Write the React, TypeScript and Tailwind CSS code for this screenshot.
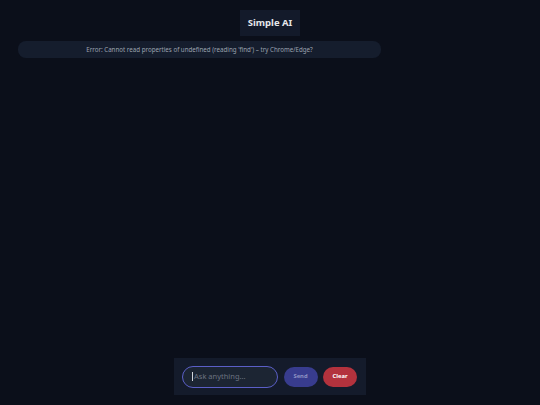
import React from 'react';

export default function App() {
  return (
    <div
      className="w-[540px] h-[405px] bg-[#0b0f1a] flex flex-col overflow-hidden"
      style={{ fontFamily: '"Noto Sans", "Open Sans", sans-serif' }}
    >
      <div className="flex justify-center pt-[10px]">
        <div className="w-[60px] h-[26px] bg-[#131a2a] flex items-center justify-center text-[9.5px] font-bold text-[#e5e7eb]">
          Simple AI
        </div>
      </div>

      <div className="mt-[5px] ml-[18px] w-[363px] h-[17px] rounded-[8px] bg-[#151d2d] flex items-center justify-center text-[6.2px] text-[#9ca3af]">
        Error: Cannot read properties of undefined (reading 'find') – try Chrome/Edge?
      </div>

      <div className="flex-1" />

      <div className="flex justify-center mb-[10px]">
        <div className="w-[192px] h-[37px] bg-[#141b2b] flex items-center gap-[5.5px] px-[8px]">
          <div className="w-[96px] h-[22px] rounded-full border border-[#5b5fc7] bg-[#1c2533] flex items-center pl-[9px] text-[7.5px] text-[#6b7280]">
            <span className="w-px h-[9px] bg-[#d1d5db] mr-[1px]" />
            Ask anything...
          </div>
          <button className="w-[34px] h-[20px] rounded-full bg-[#383c8e] text-[5.8px] font-bold text-[#8f93c4]">
            Send
          </button>
          <button className="w-[34px] h-[20px] rounded-full bg-[#b3323d] text-[5.8px] font-bold text-white">
            Clear
          </button>
        </div>
      </div>
    </div>
  );
}
